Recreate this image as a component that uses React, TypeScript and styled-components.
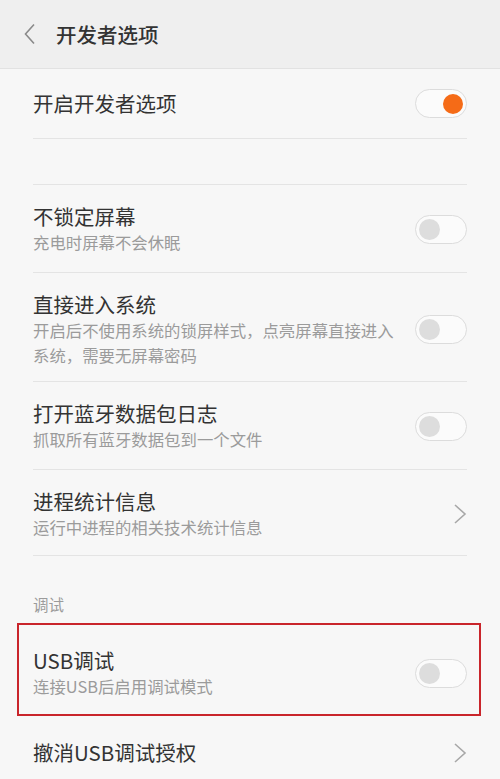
import React from "react";
import styled, { createGlobalStyle } from "styled-components";

const Global = createGlobalStyle`
  html, body { margin: 0; padding: 0; background: #f7f7f7; }
  body { font-family: "Noto Sans CJK SC", "Noto Sans", sans-serif; }
  * { box-sizing: border-box; }
`;

const Page = styled.div`
  width: 500px;
  height: 779px;
  overflow: hidden;
  background: #f7f7f7;
  display: flex;
  flex-direction: column;
`;

const Header = styled.header`
  height: 69px;
  flex-shrink: 0;
  background: #efefef;
  border-bottom: 1px solid #e2e2e2;
  display: flex;
  align-items: center;
  padding-left: 24px;
  gap: 20px;
`;

const HeaderTitle = styled.h1`
  margin: 0;
  font-size: 20.5px;
  font-weight: 500;
  color: #333;
  line-height: 28px;
  padding-bottom: 1px;
`;

const List = styled.div`
  display: flex;
  flex-direction: column;
  padding: 0 33px;
`;

const Row = styled.div<{ $pt: number; $pb: number; $divider?: boolean }>`
  display: flex;
  align-items: center;
  justify-content: space-between;
  padding: ${(p) => p.$pt}px 0 ${(p) => p.$pb}px;
  border-bottom: ${(p) => (p.$divider === false ? "none" : "1px solid #e4e4e4")};
  gap: 16px;
`;

const Texts = styled.div`
  display: flex;
  flex-direction: column;
  min-width: 0;
`;

const Title = styled.div`
  font-size: 20.5px;
  line-height: 27px;
  color: #333;
`;

const Sub = styled.div`
  font-size: 16.4px;
  line-height: 25px;
  color: #9b9b9b;
  max-width: 370px;
`;

const Gap = styled.div<{ $h: number }>`
  height: ${(p) => p.$h}px;
  border-bottom: 1px solid #e4e4e4;
`;

const SectionLabel = styled.div`
  font-size: 15.5px;
  line-height: 20px;
  color: #9b9b9b;
  padding: 38px 0 9px;
`;

const Highlight = styled.div`
  margin: 0 19px 0 17px;
  border: 2px solid #c9252b;
  padding: 0 12px 0 14px;
`;

const Track = styled.div<{ $on?: boolean }>`
  width: 52px;
  height: 29px;
  flex-shrink: 0;
  border-radius: 15px;
  border: 1px solid #dcdcdc;
  background: #fbfbfb;
  display: flex;
  align-items: center;
  justify-content: ${(p) => (p.$on ? "flex-end" : "flex-start")};
  padding: 0 3px;
`;

const Knob = styled.div<{ $on?: boolean }>`
  width: ${(p) => (p.$on ? 20 : 21)}px;
  height: ${(p) => (p.$on ? 20 : 21)}px;
  border-radius: 50%;
  background: ${(p) => (p.$on ? "#f56b17" : "#dddddd")};
`;

const Toggle = ({ on }: { on?: boolean }) => (
  <Track $on={on}>
    <Knob $on={on} />
  </Track>
);

const Chevron = () => (
  <svg width="14" height="22" viewBox="0 0 14 22" style={{ flexShrink: 0 }}>
    <polyline points="2,2 12,11 2,20" fill="none" stroke="#a8a8a8" strokeWidth="1.6" />
  </svg>
);

const Back = () => (
  <svg width="12" height="22" viewBox="0 0 12 22">
    <polyline points="10,1.5 1.5,11 10,20.5" fill="none" stroke="#8a8a8a" strokeWidth="1.6" />
  </svg>
);

export default function App() {
  return (
    <Page>
      <Global />
      <Header>
        <Back />
        <HeaderTitle>开发者选项</HeaderTitle>
      </Header>
      <List>
        <Row $pt={20} $pb={20}>
          <Title>开启开发者选项</Title>
          <Toggle on />
        </Row>
        <Gap $h={46} />
        <Row $pt={18} $pb={17}>
          <Texts>
            <Title>不锁定屏幕</Title>
            <Sub>充电时屏幕不会休眠</Sub>
          </Texts>
          <Toggle />
        </Row>
        <Row $pt={18} $pb={13}>
          <Texts>
            <Title>直接进入系统</Title>
            <Sub>开启后不使用系统的锁屏样式，点亮屏幕直接进入系统，需要无屏幕密码</Sub>
          </Texts>
          <Toggle />
        </Row>
        <Row $pt={18} $pb={17}>
          <Texts>
            <Title>打开蓝牙数据包日志</Title>
            <Sub>抓取所有蓝牙数据包到一个文件</Sub>
          </Texts>
          <Toggle />
        </Row>
        <Row $pt={18} $pb={15}>
          <Texts>
            <Title>进程统计信息</Title>
            <Sub>运行中进程的相关技术统计信息</Sub>
          </Texts>
          <Chevron />
        </Row>
        <SectionLabel>调试</SectionLabel>
      </List>
      <Highlight>
        <Row $pt={22} $pb={15} $divider={false}>
          <Texts>
            <Title>USB调试</Title>
            <Sub>连接USB后启用调试模式</Sub>
          </Texts>
          <Toggle />
        </Row>
      </Highlight>
      <List>
        <Row $pt={23} $pb={23}>
          <Title>撤消USB调试授权</Title>
          <Chevron />
        </Row>
      </List>
    </Page>
  );
}
